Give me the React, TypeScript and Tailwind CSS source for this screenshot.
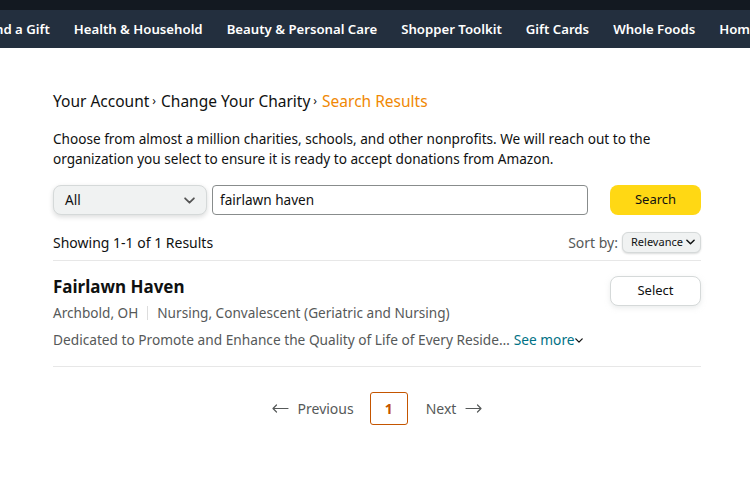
import React from "react";

const Chevron = ({ className = "" }: { className?: string }) => (
  <svg viewBox="0 0 10 6" className={className} fill="none" stroke="currentColor" strokeWidth="1.6" strokeLinecap="round" strokeLinejoin="round">
    <path d="M1 1l4 4 4-4" />
  </svg>
);

const Arrow = ({ left }: { left?: boolean }) => (
  <svg viewBox="0 0 17 9" className="w-[17px] h-[9px]" fill="none" stroke="currentColor" strokeWidth="1.2" strokeLinecap="round" strokeLinejoin="round">
    {left ? <path d="M1 4.5h15M4.5 1L1 4.5 4.5 8" /> : <path d="M1 4.5h15M12.5 1L16 4.5 12.5 8" />}
  </svg>
);

export default function App() {
  const nav = ["nd a Gift", "Health & Household", "Beauty & Personal Care", "Shopper Toolkit", "Gift Cards", "Whole Foods", "Home"];
  return (
    <div className="w-[750px] h-[480px] bg-white overflow-hidden" style={{ fontFamily: '"Noto Sans", Arial, sans-serif' }}>
      <div className="h-[10px] bg-[#131921]" />
      <div className="h-[38px] pt-[2px] bg-[#232f3e] flex items-center gap-[24px] whitespace-nowrap -ml-[5px] text-white text-[13.2px] font-semibold overflow-hidden">
        {nav.map((n) => (
          <span key={n} className="shrink-0">{n}</span>
        ))}
      </div>
      <div className="ml-[53px] w-[648px] text-[#0f1111]">
        <div className="mt-[41px] text-[15.5px] leading-[24px] flex items-center">
          <span>Your Account</span>
          <span className="ml-[3px] mr-[5px] text-[12px]">›</span>
          <span>Change Your Charity</span>
          <span className="ml-[3px] mr-[5px] text-[12px]">›</span>
          <span className="text-[#f08804]">Search Results</span>
        </div>
        <p className="mt-[16px] text-[13.6px] leading-[20px]">
          Choose from almost a million charities, schools, and other nonprofits. We will reach out to the organization you select to ensure it is ready to accept donations from Amazon.
        </p>
        <div className="mt-[16px] flex items-center h-[30px]">
          <div className="w-[154px] h-[30px] rounded-[8px] bg-[#f0f2f2] border border-[#d5d9d9] shadow-[0_2px_5px_rgba(15,17,17,0.15)] flex items-center justify-between px-[11px] text-[13.6px]">
            <span>All</span>
            <Chevron className="w-[11px] h-[7px] text-[#555]" />
          </div>
          <div className="ml-[5px] w-[376px] h-[30px] rounded-[4px] border border-[#888c8c] flex items-center px-[7px] text-[13.6px]">
            fairlawn haven
          </div>
          <div className="ml-[22px] w-[91px] h-[30px] rounded-[8px] bg-[#ffd814] flex items-center justify-center text-[13px]">
            Search
          </div>
        </div>
        <div className="mt-[16px] flex items-center justify-between h-[22px]">
          <span className="text-[14px]">Showing 1-1 of 1 Results</span>
          <div className="flex items-center">
            <span className="text-[14px] text-[#565959]">Sort by:</span>
            <div className="ml-[4px] h-[21px] w-[79px] rounded-[6px] bg-[#f0f2f2] border border-[#d5d9d9] shadow-[0_1px_2px_rgba(15,17,17,0.15)] flex items-center justify-between pl-[8px] pr-[5px] text-[11px]">
              <span>Relevance</span>
              <Chevron className="w-[9px] h-[6px]" />
            </div>
          </div>
        </div>
        <div className="mt-[7px] border-t border-[#e7e7e7]" />
        <div className="mt-[15px] flex justify-between">
          <div>
            <div className="text-[17px] font-bold leading-[22px]">Fairlawn Haven</div>
            <div className="mt-[5px] text-[13.6px] leading-[20px] text-[#565959] flex items-center">
              <span>Archbold, OH</span>
              <span className="mx-[9px] w-px h-[14px] bg-[#ddd]" />
              <span>Nursing, Convalescent (Geriatric and Nursing)</span>
            </div>
            <div className="mt-[7px] text-[13.7px] leading-[20px] text-[#565959] flex items-center">
              <span>Dedicated to Promote and Enhance the Quality of Life of Every Reside…</span>
              <span className="ml-[4px] text-[#007185]">See more</span>
              <Chevron className="w-[8px] h-[5px] text-[#0f1111]" />
            </div>
          </div>
          <div className="w-[91px] h-[30px] rounded-[8px] border border-[#d5d9d9] shadow-[0_2px_5px_rgba(213,217,217,0.5)] bg-white flex items-center justify-center text-[13px]">
            Select
          </div>
        </div>
        <div className="mt-[16px] border-t border-[#e7e7e7]" />
        <div className="mt-[24px] flex items-center justify-center text-[14px] text-[#565959] h-[34px]">
          <span className="mr-[9px] flex items-center"><Arrow left /></span>
          <span>Previous</span>
          <div className="ml-[16px] w-[38px] h-[33px] rounded-[3px] border border-[#c45500] flex items-center justify-center text-[#c45500] font-bold">1</div>
          <span className="ml-[18px]">Next</span>
          <span className="ml-[9px] flex items-center"><Arrow /></span>
        </div>
      </div>
    </div>
  );
}
